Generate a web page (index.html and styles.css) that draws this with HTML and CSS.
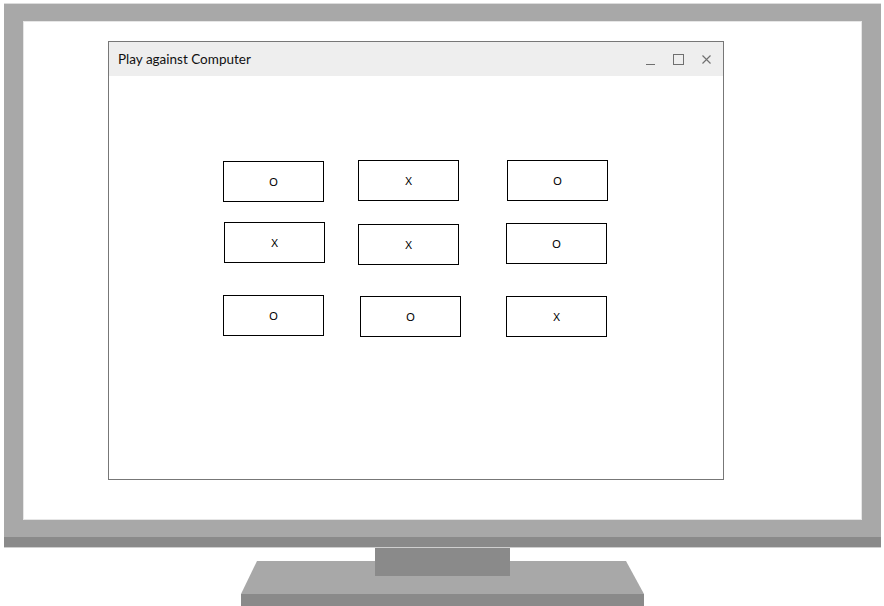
FILE: index.html
```html
<!DOCTYPE html>
<html lang="en">
<head>
  <meta charset="UTF-8">
  <title>Play against Computer</title>
  <link rel="stylesheet" href="styles.css">
</head>
<body>
  <div class="monitor">
    <div class="bezel">
      <div class="screen">
        <div class="window">
          <div class="titlebar">
            <span class="title">Play against Computer</span>
            <div class="controls">
              <svg class="ctl" width="11" height="11" viewBox="0 0 11 11"><line x1="1" y1="10.5" x2="10" y2="10.5" stroke="#6f6f6f" stroke-width="1"/></svg>
              <svg class="ctl" width="11" height="11" viewBox="0 0 11 11"><rect x="0.5" y="0.5" width="10" height="10" fill="none" stroke="#6f6f6f" stroke-width="1"/></svg>
              <svg class="ctl" width="11" height="11" viewBox="0 0 11 11"><path d="M1.5 1.5 L9.5 9.5 M9.5 1.5 L1.5 9.5" stroke="#6f6f6f" stroke-width="1.1" fill="none"/></svg>
            </div>
          </div>
          <div class="board">
            <div class="cell">O</div>
            <div class="cell">X</div>
            <div class="cell">O</div>
            <div class="cell">X</div>
            <div class="cell">X</div>
            <div class="cell">O</div>
            <div class="cell">O</div>
            <div class="cell">O</div>
            <div class="cell">X</div>
          </div>
        </div>
      </div>
    </div>
    <div class="chin"></div>
  </div>
  <div class="stand">
    <div class="neck"></div>
    <div class="base"></div>
    <div class="foot"></div>
  </div>
</body>
</html>
```

FILE: styles.css
```css
/* Page */
body {
  margin: 0;
  background: #ffffff;
  font-family: "Noto Sans", Arial, sans-serif;
  color: #000;
  overflow: hidden;
}

/* Monitor frame */
.monitor {
  width: 877px;
  margin: 3px 0 0 4px;
  border-top: 1px solid #dcdcdc;
}
.bezel {
  background: #a8a8a8;
  padding: 17px 19px 17px 19px;
}
.screen {
  height: 478px;
  background: #ffffff;
  border: 1px solid #e6e6e6;
  padding: 19px 0 0 84px;
}
.chin {
  height: 10px;
  background: #8a8a8a;
  border-bottom: 1px solid #cfcfcf;
}

/* Stand */
.stand {
  display: flex;
  flex-direction: column;
  align-items: center;
  margin-left: 1px;
}
.neck {
  width: 135px;
  height: 28px;
  background: #8a8a8a;
  position: relative;
  z-index: 1;
}
.base {
  width: 403px;
  height: 33px;
  margin-top: -15px;
  background: #a8a8a8;
  clip-path: polygon(16px 0, 385px 0, 403px 100%, 0 100%);
}
.foot {
  width: 403px;
  height: 12px;
  background: #8a8a8a;
}

/* Window */
.window {
  width: 614px;
  height: 437px;
  border: 1px solid #777777;
  background: #ffffff;
}
.titlebar {
  height: 34px;
  background: #eeeeee;
  display: flex;
  align-items: center;
  justify-content: space-between;
  padding: 0 11px 0 9px;
}
.title {
  font-family: Lato, "Noto Sans", sans-serif;
  font-size: 13.5px;
  color: #111;
}
.controls {
  display: flex;
  align-items: center;
  gap: 17px;
}
.ctl {
  display: block;
}

/* Board */
.board {
  display: grid;
  grid-template-columns: 135px 148px 101px;
  grid-template-rows: 62px 73px 41px;
  margin: 84px 0 0 114px;
}
.cell {
  width: 101px;
  height: 41px;
  box-sizing: border-box;
  border: 1px solid #000;
  display: flex;
  align-items: center;
  justify-content: center;
  font-size: 11.5px;
}
.cell:nth-child(1) { margin-top: 1px; }
.cell:nth-child(3) { margin-left: 1px; }
.cell:nth-child(4) { margin-left: 1px; }
.cell:nth-child(5) { margin-top: 2px; }
.cell:nth-child(6) { margin-top: 1px; }
.cell:nth-child(8) { margin: 1px 0 0 2px; }
.cell:nth-child(9) { margin-top: 1px; }
```
